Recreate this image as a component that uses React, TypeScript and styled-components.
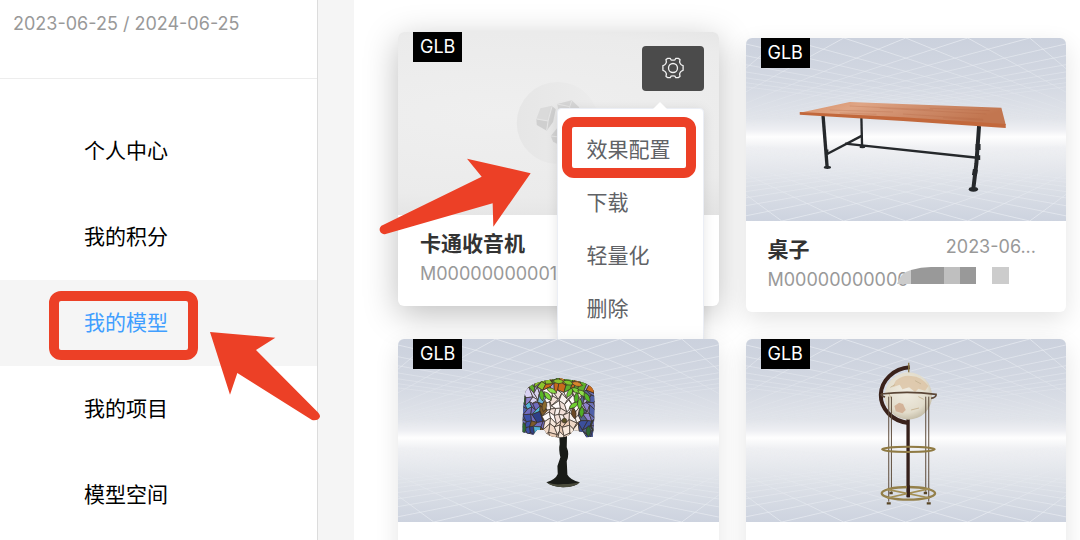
import React from "react";
import styled, { createGlobalStyle, css } from "styled-components";

const RED = "#ec4026";

const GlobalStyle = createGlobalStyle`
  *, *::before, *::after { box-sizing: border-box; }
  body {
    margin: 0;
    background: #fff;
    color: #000;
    font-family: Inter, "Noto Sans CJK SC", sans-serif;
    font-size: 21px;
    line-height: 30px;
  }
`;

const Page = styled.div`
  display: flex;
  height: 100vh;
  overflow: hidden;
  background: #f5f5f5;
`;

const Sidebar = styled.aside`
  position: relative;
  z-index: 1;
  flex: 0 0 318px;
  background: #fff;
  border-right: 1px solid #dcdcdc;
`;

const Validity = styled.p`
  margin: 0;
  padding: 9px 13px 39px;
  border-bottom: 1px solid #ededed;
  color: #999;
  font-size: 18px;
`;

const Nav = styled.nav`
  display: flex;
  flex-direction: column;
  padding-top: 29px;
`;

const NavLink = styled.a<{ $active?: boolean }>`
  position: relative;
  display: flex;
  align-items: center;
  height: 86px;
  padding-left: 84px;
  color: ${(p) => (p.$active ? "#409eff" : "#000")};
  background: ${(p) => (p.$active ? "#f5f5f5" : "transparent")};
  z-index: ${(p) => (p.$active ? 1 : 0)};
  text-decoration: none;
`;

const Frame = styled.span`
  position: absolute;
  border: 10px solid ${RED};
  border-radius: 12px;
  pointer-events: none;
`;

const NavFrame = styled(Frame)`
  left: 49px;
  top: 11px;
  width: 149px;
  height: 69px;
`;

const MenuFrame = styled(Frame)`
  left: 4px;
  top: 8px;
  width: 134px;
  height: 61px;
`;

const Pointer = styled.svg`
  position: absolute;
  fill: ${RED};
  pointer-events: none;
`;

const NavPointer = styled(Pointer)`
  left: 210px;
  top: 52px;
`;

const CardPointer = styled(Pointer)`
  left: -19px;
  top: 126px;
`;

const Main = styled.main`
  flex: 1;
  min-width: 0;
  margin-left: 36px;
  padding: 38px 14px 0 44px;
  background: #fff;
`;

const Grid = styled.div`
  display: grid;
  grid-template-columns: 1fr 1fr;
  gap: 27px;
`;

const Card = styled.article<{ $raised?: boolean }>`
  position: relative;
  border-radius: 6px;
  background: #fff;
  box-shadow: 0 8px 24px rgba(0, 0, 0, 0.11);
  ${(p) =>
    p.$raised &&
    css`
      transform: translateY(-6px);
      box-shadow: 0 8px 34px rgba(0, 0, 0, 0.26);
    `}
`;

const Thumb = styled.svg`
  display: block;
  width: 100%;
  height: 183px;
  border-radius: 6px 6px 0 0;
`;

const Badge = styled.span`
  position: absolute;
  top: 0;
  left: 15px;
  padding: 0 7px;
  background: #000;
  color: #fff;
  font-size: 18px;
`;

const CardBody = styled.div`
  position: relative;
  min-height: 91px;
  padding: 14px 30px 17px 22px;
`;

const TitleRow = styled.div`
  display: flex;
  align-items: flex-start;
  justify-content: space-between;
`;

const Title = styled.h3`
  margin: 0;
  color: #333;
  font-size: 21px;
  font-weight: 700;
`;

const Created = styled.time`
  color: #999;
  font-size: 18px;
  line-height: 24px;
`;

const ModelId = styled.p`
  margin: 0;
  color: #999;
  font-size: 18px;
`;

const Redaction = styled.svg`
  position: absolute;
  left: 151px;
  top: 46px;
`;

const GearButton = styled.button`
  position: absolute;
  top: 14px;
  right: 15px;
  display: flex;
  align-items: center;
  justify-content: center;
  width: 62px;
  height: 45px;
  padding: 0 0 2px;
  border: 0;
  border-radius: 4px;
  background: #4b4b4b;
`;

const Menu = styled.div`
  position: absolute;
  top: 76px;
  right: 15px;
  width: 147px;
  padding: 14px 0;
  border: 1px solid #ebeef5;
  border-radius: 4px;
  background: #fff;
  box-shadow: 0 2px 12px rgba(0, 0, 0, 0.1);

  &::before {
    content: "";
    position: absolute;
    top: -7px;
    right: 36px;
    border: solid transparent;
    border-width: 0 7px 7px;
    border-bottom-color: #fff;
  }
`;

const MenuItem = styled.button`
  display: block;
  width: 100%;
  height: 53px;
  padding: 0 0 0 29px;
  border: 0;
  background: transparent;
  color: #606266;
  font: inherit;
  text-align: left;
`;

/* Perspective grid shared by the floor and the ceiling of the stage. */
const HORIZON = 98;
const rays: string[] = [];
for (let i = -9; i <= 9; i++) {
  const x = 160 + i * 62;
  [0, 183].forEach((edge) => {
    if (x < 370) rays.push(`M${x} ${edge}L400 ${HORIZON}`);
    if (x > -50) rays.push(`M${x} ${edge}L-80 ${HORIZON}`);
  });
}

const Stage = ({ id, label, children }: { id: string; label: string; children: React.ReactNode }) => (
  <Thumb viewBox="0 0 321 183" preserveAspectRatio="xMidYMid slice" role="img" aria-label={label}>
    <defs>
      <linearGradient id={`${id}-sky`} x1="0" y1="0" x2="0" y2="1">
        <stop offset="0" stopColor="#cbd1dd" />
        <stop offset="0.25" stopColor="#d3d8e2" />
        <stop offset="0.44" stopColor="#e1e4ea" />
        <stop offset="0.5" stopColor="#eeeff3" />
        <stop offset="0.54" stopColor="#fefefe" />
        <stop offset="0.6" stopColor="#eff0f3" />
        <stop offset="0.8" stopColor="#dce0e7" />
        <stop offset="1" stopColor="#cdd3df" />
      </linearGradient>
      <linearGradient id={`${id}-fade`} x1="0" y1="0" x2="0" y2="1">
        <stop offset="0" stopColor="#fff" />
        <stop offset="0.4" stopColor="#333" />
        <stop offset="0.54" stopColor="#000" />
        <stop offset="0.7" stopColor="#333" />
        <stop offset="1" stopColor="#fff" />
      </linearGradient>
      <mask id={`${id}-mask`} maskUnits="userSpaceOnUse" x="0" y="0" width="321" height="183">
        <rect width="321" height="183" fill={`url(#${id}-fade)`} />
      </mask>
    </defs>
    <rect x="-200" width="721" height="183" fill={`url(#${id}-sky)`} />
    <g mask={`url(#${id}-mask)`}>
      <path d={rays.join("")} stroke="#eef1f6" strokeWidth="0.9" opacity="0.7" fill="none" />
    </g>
    {children}
  </Thumb>
);

const Desk = () => (
  <Stage id="desk" label="桌子">
    <defs>
      <linearGradient id="wood" x1="0" y1="0" x2="1" y2="0.3">
        <stop offset="0" stopColor="#d88f66" />
        <stop offset="0.3" stopColor="#dfa585" />
        <stop offset="0.65" stopColor="#cd8a68" />
        <stop offset="1" stopColor="#c27650" />
      </linearGradient>
    </defs>
    <g transform="translate(-16 -18) scale(0.3333)">
      <g stroke="#25282b" fill="none">
        <path d="M280 288L292 440" strokeWidth="10" />
        <path d="M395 294L397 380" strokeWidth="7" />
        <path d="M292 402L397 347" strokeWidth="7" />
        <path d="M346 371L750 414" strokeWidth="7" />
        <path d="M748 318L740 430L731 505" strokeWidth="12" />
        <path d="M745 372v18M737 448l-3 18M288 396h8M744 406v14" strokeWidth="15" />
      </g>
      <g fill="#25282b">
        <ellipse cx="293" cy="442" rx="11" ry="5" />
        <ellipse cx="398" cy="381" rx="9" ry="4" />
        <ellipse cx="731" cy="508" rx="14" ry="7" />
      </g>
      <path d="M210 278L360 246L815 263L828 314L520 294Z" fill="url(#wood)" />
      <path d="M210 276L520 292L828 312V324L520 303L210 284Z" fill="#c2683c" />
      <path
        d="M300 270l190 6M360 258l250 12M450 264l320 18M520 282l240 16M330 279l110 4M600 265l180 7M640 293l120 8"
        stroke="#ad5e3c"
        strokeWidth="2"
        opacity="0.35"
      />
    </g>
  </Stage>
);

/* Stained-glass pieces: a loosely brick-laid grid, coloured by the motif each piece falls in. */
const jitter = (n: number) => {
  const v = Math.sin(n * 127.1 + 11.7) * 43758.5453;
  return v - Math.floor(v);
};
const COLS = 15;
const ROWS = 10;
const node = (c: number, r: number) => ({
  x: 58 + ((c + (r % 2) * 0.5) * 222) / COLS + (jitter(c * 31 + r * 7) - 0.5) * 14,
  y: 50 + ((r + (c % 2) * 0.5) * 182) / ROWS + (jitter(c * 17 + r * 53) - 0.5) * 14,
});
const palette = (c: number, r: number) => {
  const pick = (list: string[]) => list[Math.floor(jitter(c * 71 + r * 29) * list.length)];
  if (r < 2) return pick(["#c86b1c", "#8cc42c", "#d88a2e", "#a9a2d8", "#5fae2c"]);
  if (c < 1 || c > 13) return pick(["#4f60a8", "#6d72b8", "#315c3a", "#3f8ec0"]);
  if (c < 5) {
    if (r < 4) return pick(["#b9aee6", "#8e83cf", "#70b6da", "#d8d2f2"]);
    return pick(["#3c50a8", "#52b2d6", "#6f6cc0", "#2f4088", "#7c5a2c"]);
  }
  if (c > 11) return pick(["#8d82cc", "#3b4f9c", "#b8acdf", "#56658c"]);
  if (r > 6) return pick(["#f0d8c6", "#e9cbb4", "#f8e9dc"]);
  return pick(["#f7efec", "#fffafa", "#f1dfd8"]);
};
const glass: { d: string; fill: string }[] = [];
for (let r = -1; r <= ROWS; r++) {
  for (let c = -1; c <= COLS; c++) {
    const pts = [node(c, r), node(c + 1, r), node(c + 1, r + 1), node(c, r + 1)];
    glass.push({ d: `M${pts.map((p) => `${p.x.toFixed(1)} ${p.y.toFixed(1)}`).join("L")}Z`, fill: palette(c, r) });
  }
}

/* Leaves laid over the glass: centre x, centre y, angle, colour. */
const leaves: [number, number, number, string][] = [
  [126, 106, 80, "#55b526"],
  [144, 108, 50, "#7bd43a"],
  [156, 92, 25, "#8fdf4a"],
  [134, 138, 100, "#8a6a2c"],
  [210, 98, 120, "#6fce32"],
  [230, 92, 30, "#7bd43a"],
  [248, 100, 35, "#8fdf4a"],
  [230, 114, 95, "#4fae26"],
  [222, 136, 145, "#6fce32"],
  [240, 132, 90, "#62c42c"],
  [246, 156, 95, "#4fae26"],
  [222, 160, 80, "#6b4724"],
  [262, 112, 60, "#55b526"],
  [72, 204, 90, "#2f6a34"],
  [266, 214, 90, "#2f6a34"],
  [176, 64, 5, "#8cc42c"],
  [206, 68, 15, "#7fc42c"],
  [232, 72, 15, "#d8862c"],
];

const Lamp = () => (
  <Stage id="lamp" label="台灯">
    <defs>
      <clipPath id="shade">
        <path d="M76 100Q84 66 165 58Q176 50 190 57Q272 64 282 92Q288 150 279 230L260 232L250 216L222 210Q206 236 172 232Q142 232 134 210L112 210L100 224L68 216Q68 150 76 100Z" />
      </clipPath>
    </defs>
    <g transform="translate(102 21) scale(0.3333)">
      <path
        d="M178 222L202 222L201 262Q210 282 201 304L203 344Q212 360 240 367Q230 380 190 382Q156 380 140 367Q168 358 174 342L173 318L182 292Q176 268 180 252Z"
        fill="#191b17"
      />
      <path d="M140 367Q165 376 190 372Q222 372 240 366Q230 381 190 382Q156 380 140 367Z" fill="#4b4c3c" />
      <g clipPath="url(#shade)" stroke="#3a3029" strokeWidth="2">
        <rect x="60" y="46" width="232" height="192" fill="#25231f" />
        {glass.map((g, i) => (
          <path key={i} d={g.d} fill={g.fill} />
        ))}
        {leaves.map(([x, y, angle, fill], i) => (
          <path key={i} d="M-17 0Q0 -14 17 0Q0 14 -17 0Z" transform={`translate(${x} ${y}) rotate(${angle})`} fill={fill} />
        ))}
        <circle cx="194" cy="182" r="7" fill="#5c5326" />
      </g>
    </g>
  </Stage>
);

const Globe = () => (
  <Stage id="globe" label="地球仪">
    <defs>
      <radialGradient id="sphere" cx="0.45" cy="0.4" r="0.65">
        <stop offset="0" stopColor="#f1ede2" />
        <stop offset="0.7" stopColor="#e2dccb" />
        <stop offset="1" stopColor="#bdb59f" />
      </radialGradient>
    </defs>
    <g transform="translate(104 11) scale(0.3333)" fill="none">
      <path d="M175 205V442" stroke="#35201a" strokeWidth="10" />
      <path d="M180 52A95 84 0 0 0 176 219" stroke="#3a221b" strokeWidth="12" />
      <path d="M177 38V70" stroke="#8a7440" strokeWidth="4" />
      <circle cx="176" cy="138" r="71" fill="url(#sphere)" />
      <path
        d="M138 92Q160 74 184 78Q216 80 236 108L226 122L206 116L196 126L178 112L158 118L150 104L128 112Z"
        fill="#dcc3a4"
        opacity="0.8"
      />
      <path d="M134 168L148 158L160 162L168 180L158 190L138 184Z" fill="#cfaa8e" opacity="0.85" />
      <path d="M122 112l14-8M196 92l18 10M206 140l16 8M184 180l24-6M116 128l10 20" stroke="#c9b797" strokeWidth="3" />
      <path d="M117 140V455M237 140V455M125 140V425M228 140V425" stroke="#5d4b3a" strokeWidth="3" />
      <path d="M94 132Q175 122 259 133Q260 142 244 145M94 132Q94 138 106 141" stroke="#5b4636" strokeWidth="5" />
      <ellipse cx="176" cy="298" rx="79" ry="8" stroke="#8f7a43" strokeWidth="6" />
      <ellipse cx="176" cy="430" rx="80" ry="19" stroke="#94804a" strokeWidth="7" />
      <path d="M112 418L240 444M240 416L112 444" stroke="#a38f55" strokeWidth="5" />
      <path d="M176 406V442" stroke="#35201a" strokeWidth="9" />
      <path d="M111 460h12M231 460h12M119 429h10M222 429h10" stroke="#594626" strokeWidth="7" />
    </g>
  </Stage>
);

const Placeholder = () => (
  <Thumb viewBox="0 0 321 183" preserveAspectRatio="xMidYMid slice" role="img" aria-label="卡通收音机">
    <defs>
      <radialGradient id="plate" cx="0.42" cy="0.45" r="0.75">
        <stop offset="0" stopColor="#efefef" />
        <stop offset="0.6" stopColor="#ebebeb" />
        <stop offset="1" stopColor="#dcdcdc" />
      </radialGradient>
      <linearGradient id="disc" x1="0" y1="0" x2="1" y2="0">
        <stop offset="0" stopColor="#e6e6e6" />
        <stop offset="1" stopColor="#ececec" />
      </linearGradient>
    </defs>
    <rect x="-200" width="721" height="183" fill="url(#plate)" />
    <circle cx="160" cy="91" r="41" fill="url(#disc)" />
    <g transform="translate(-28 -32) scale(0.3333)">
      <path d="M512 325L546 317L535 363L500 356Z" fill="#dadada" />
      <path d="M546 317L558 328L550 366L531 392L535 363Z" fill="#d0d0d0" />
      <path d="M500 357L535 363L531 392L501 375Z" fill="#cfcfcf" />
      <path d="M501 357L535 363L547 319M535 363L531 391" stroke="#e6e6e6" strokeWidth="3" fill="none" />
      <path d="M562 312L606 301L628 322L628 350L570 345Z" fill="#d6d6d6" />
      <path d="M562 312L600 320L606 302M600 320V350" stroke="#e6e6e6" strokeWidth="3" fill="none" />
      <path d="M543 408L562 385L600 400L580 440L550 425Z" fill="#d3d3d3" />
      <path d="M543 408L575 412" stroke="#e6e6e6" strokeWidth="3" />
    </g>
  </Thumb>
);

const GearIcon = () => (
  <svg
    width="24"
    height="24"
    viewBox="-12 -12 24 24"
    fill="none"
    stroke="#f2f2f2"
    strokeWidth="1.3"
    strokeLinejoin="round"
    aria-hidden="true"
  >
    <path d="M-5.2 -9.7L-2.8 -9.7L-2 -8.2Q0 -7.4 2 -8.2L2.8 -9.7L5.2 -9.7L7 -8.4L6.6 -5.9Q7.2 -3.8 8.6 -3L10.1 -2.3V2.3L8.6 3Q7.2 3.8 6.6 5.9L7 8.4L5.2 9.7L2.8 9.7L2 8.2Q0 7.4 -2 8.2L-2.8 9.7L-5.2 9.7L-7 8.4L-6.6 5.9Q-7.2 3.8 -8.6 3L-10.1 2.3V-2.3L-8.6 -3Q-7.2 -3.8 -6.6 -5.9L-7 -8.4Z" />
    <circle r="4.5" />
  </svg>
);

const navItems = ["个人中心", "我的积分", "我的模型", "我的项目", "模型空间"];
const menuItems = ["效果配置", "下载", "轻量化", "删除"];

export default function App() {
  return (
    <Page>
      <GlobalStyle />
      <Sidebar>
        <Validity>2023-06-25 / 2024-06-25</Validity>
        <Nav>
          {navItems.map((label) => {
            const active = label === "我的模型";
            return (
              <NavLink key={label} href="#" $active={active} aria-current={active ? "page" : undefined}>
                {label}
                {active && (
                  <>
                    <NavFrame />
                    <NavPointer width="110" height="89" viewBox="630 187 330 267" aria-hidden="true">
                      <path d="M630 187L826 204L768 241L955 429Q960 435 960 441Q955 454 936 451L712 310L690 375Z" />
                    </NavPointer>
                  </>
                )}
              </NavLink>
            );
          })}
        </Nav>
      </Sidebar>
      <Main>
        <Grid>
          <Card $raised>
            <Placeholder />
            <Badge>GLB</Badge>
            <CardBody>
              <TitleRow>
                <Title>卡通收音机</Title>
              </TitleRow>
              <ModelId>M00000000001</ModelId>
            </CardBody>
            <GearButton type="button" aria-label="设置" aria-expanded="true">
              <GearIcon />
            </GearButton>
            <Menu>
              {menuItems.map((item) => (
                <MenuItem key={item} type="button">
                  {item}
                </MenuItem>
              ))}
              <MenuFrame />
            </Menu>
            <CardPointer width="152" height="77" viewBox="10 24 456 231" aria-hidden="true">
              <path d="M465 70L274 26L318 80L22 225A14 14 0 0 0 30 252L351 160L353 230Z" />
            </CardPointer>
          </Card>
          <Card>
            <Desk />
            <Badge>GLB</Badge>
            <CardBody>
              <TitleRow>
                <Title>桌子</Title>
                <Created>2023-06...</Created>
              </TitleRow>
              <ModelId>M00000000000</ModelId>
              <Redaction width="112" height="17" viewBox="0 0 112 17" aria-hidden="true">
                <path d="M0 17Q4 5 14 3V17Z" fill="#ccc" />
                <path d="M14 3Q24 0 34 0H47V17H14Z" fill="#999" />
                <path d="M47 0H63V17H47Z" fill="#bfbfbf" />
                <path d="M63 0H79V17H63Z" fill="#999" />
                <path d="M95 0H112V17H95Z" fill="#ccc" />
              </Redaction>
            </CardBody>
          </Card>
          <Card>
            <Lamp />
            <Badge>GLB</Badge>
            <CardBody />
          </Card>
          <Card>
            <Globe />
            <Badge>GLB</Badge>
            <CardBody />
          </Card>
        </Grid>
      </Main>
    </Page>
  );
}
